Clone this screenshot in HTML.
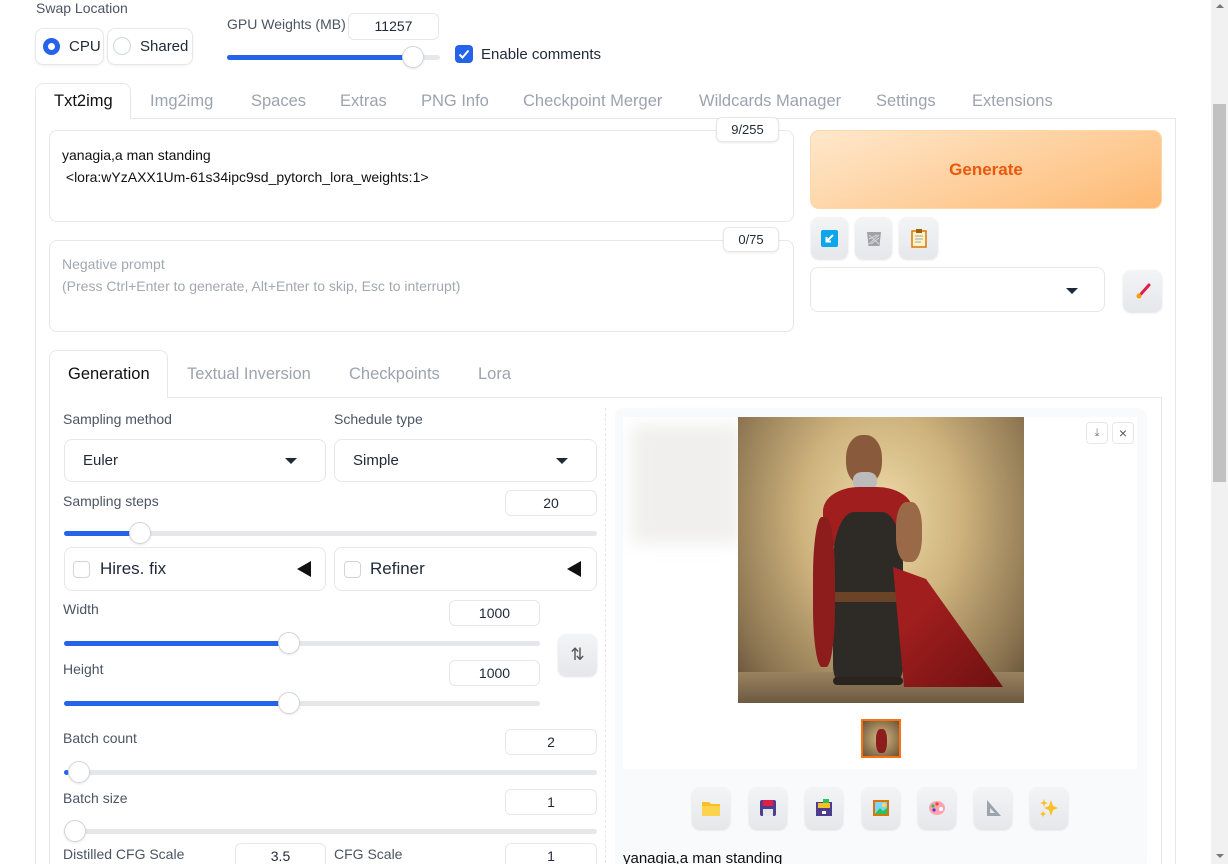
<!DOCTYPE html>
<html style="overflow:hidden;width:1228px;height:864px"><head><meta charset="utf-8"><style>
*{box-sizing:border-box;margin:0;padding:0}
body{width:1228px;height:864px;overflow:hidden;background:#fff;font-family:"Liberation Sans",sans-serif;color:#1f2937;position:relative;font-size:15px}
.a{position:absolute}
.lbl{position:absolute;color:#4b5563;font-size:14px;white-space:nowrap}
.box{position:absolute;border:1px solid #e5e7eb;border-radius:8px;background:#fff}
.inp{position:absolute;border:1px solid #e5e7eb;border-radius:6px;background:#fff;text-align:center;font-size:14px;line-height:24px;color:#1f2937}
.trk{position:absolute;height:5px;background:#e5e7eb;border-radius:3px}
.fill{position:absolute;height:5px;background:#2563eb;border-radius:3px;left:0;top:0}
.th{position:absolute;width:22px;height:22px;border-radius:50%;background:#fff;border:1px solid #d1d5db;top:-9px;box-shadow:0 1px 2px rgba(0,0,0,.1)}
.tab{position:absolute;color:#9ca3af;font-size:16.5px;white-space:nowrap}
.btn{position:absolute;background:linear-gradient(#f3f4f6,#e5e7eb);border-radius:8px;box-shadow:0 1px 2px rgba(0,0,0,.12);display:flex;align-items:center;justify-content:center}
.dd{position:absolute;border:1px solid #e5e7eb;border-radius:8px;background:#fff;font-size:15px;padding-left:18px;line-height:42px}
.car{position:absolute;right:28px;top:18px;width:0;height:0;border-left:6px solid transparent;border-right:6px solid transparent;border-top:6px solid #1f2937}
.cb{position:absolute;width:17px;height:17px;border:1px solid #d1d5db;border-radius:4px;background:#fff}
.tri{position:absolute;width:0;height:0;border-top:8px solid transparent;border-bottom:8px solid transparent;border-right:14px solid #111}
</style></head><body>

<div class="lbl" style="left:36px;top:0px">Swap Location</div>
<div class="box" style="left:35px;top:28px;width:69px;height:37px;box-shadow:0 1px 2px rgba(0,0,0,.06)"></div>
<div class="a" style="left:43px;top:38px;width:17px;height:17px;border-radius:50%;border:5px solid #2563eb;background:#fff"></div>
<div class="a" style="left:69px;top:38px;font-size:15px">CPU</div>
<div class="box" style="left:107px;top:28px;width:86px;height:37px;box-shadow:0 1px 2px rgba(0,0,0,.06)"></div>
<div class="a" style="left:113px;top:37px;width:18px;height:18px;border-radius:50%;border:1px solid #d1d5db;background:#fff"></div>
<div class="a" style="left:140px;top:38px;font-size:15px">Shared</div>

<div class="lbl" style="left:227px;top:16px">GPU Weights (MB)</div>
<div class="inp" style="left:348px;top:13px;width:91px;height:27px">11257</div>
<div class="trk" style="left:227px;top:55px;width:213px"><div class="fill" style="width:186px"></div><div class="th" style="left:175px"></div></div>
<div class="a" style="left:455px;top:45px;width:18px;height:18px;border-radius:4px;background:#2563eb"><svg width="18" height="18"><path d="M4.5 9.5l3 3 6-7" stroke="#fff" stroke-width="2" fill="none"/></svg></div>
<div class="a" style="left:481px;top:46px;font-size:15px">Enable comments</div>

<div class="a" style="left:35px;top:83px;width:96px;height:36px;border:1px solid #e5e7eb;border-bottom:none;border-radius:8px 8px 0 0;background:#fff;z-index:2"></div>
<div class="a" style="left:54px;top:92px;font-size:16.5px;color:#111;z-index:3">Txt2img</div>
<div class="tab" style="left:150px;top:92px">Img2img</div>
<div class="tab" style="left:251px;top:92px">Spaces</div>
<div class="tab" style="left:340px;top:92px">Extras</div>
<div class="tab" style="left:421px;top:92px">PNG Info</div>
<div class="tab" style="left:523px;top:92px">Checkpoint Merger</div>
<div class="tab" style="left:699px;top:92px">Wildcards Manager</div>
<div class="tab" style="left:876px;top:92px">Settings</div>
<div class="tab" style="left:972px;top:92px">Extensions</div>
<div class="a" style="left:35px;top:118px;width:1141px;height:760px;border:1px solid #e5e7eb"></div>

<div class="box" style="left:49px;top:130px;width:745px;height:92px;padding:13px 12px;font-size:14px;line-height:22px;color:#111">yanagia,a man standing<br>&nbsp;&lt;lora:wYzAXX1Um-61s34ipc9sd_pytorch_lora_weights:1&gt;</div>
<div class="inp" style="left:716px;top:117px;width:63px;height:25px;font-size:13px;box-shadow:0 1px 2px rgba(0,0,0,.08)">9/255</div>
<div class="box" style="left:49px;top:240px;width:745px;height:92px;padding:12px 12px;font-size:14px;line-height:22px;color:#a3a8b0">Negative prompt<br>(Press Ctrl+Enter to generate, Alt+Enter to skip, Esc to interrupt)</div>
<div class="inp" style="left:723px;top:227px;width:56px;height:25px;font-size:13px;box-shadow:0 1px 2px rgba(0,0,0,.08)">0/75</div>

<div class="a" style="left:810px;top:130px;width:352px;height:79px;border-radius:9px;background:linear-gradient(160deg,#ffe8cc,#fdba74);border:1px solid #fed7aa;text-align:center;line-height:77px;font-size:17px;font-weight:bold;color:#ea580c">Generate</div>
<div class="btn" style="left:811px;top:217px;width:37px;height:42px"><div style="width:17px;height:17px;background:#0ea5e9;border-radius:2px;position:relative"><svg width="17" height="17"><path d="M12 5L5.5 11.5M5.5 7v4.5H10" stroke="#fff" stroke-width="2" fill="none"/></svg></div></div>
<div class="btn" style="left:855px;top:217px;width:37px;height:42px"><svg width="18" height="18"><path d="M2 3h14l-1.5 14h-11z" fill="#a1a1aa"/><path d="M4 6l10 9M14 6l-10 9M4 10l8-4M6 15l8-6" stroke="#d4d4d8" stroke-width="1"/></svg></div>
<div class="btn" style="left:899px;top:217px;width:39px;height:42px"><svg width="16" height="20"><rect x="1" y="3" width="14" height="16" fill="#fef3c7" stroke="#d97706" stroke-width="1.5"/><rect x="5" y="1" width="6" height="4" fill="#a16207"/><path d="M4 8h8M4 11h8M4 14h6" stroke="#9ca3af"/></svg></div>
<div class="dd" style="left:810px;top:267px;width:295px;height:45px"><div class="car" style="right:26px;top:20px"></div></div>
<div class="btn" style="left:1123px;top:270px;width:39px;height:42px"><svg width="20" height="20"><path d="M16 4L8 13" stroke="#e11d48" stroke-width="3" stroke-linecap="round"/><circle cx="6" cy="15" r="2.5" fill="#f59e0b"/></svg></div>

<div class="a" style="left:49px;top:397px;width:1113px;height:480px;border:1px solid #e5e7eb"></div>
<div class="a" style="left:49px;top:350px;width:119px;height:48px;border:1px solid #e5e7eb;border-bottom:none;border-radius:8px 8px 0 0;background:#fff"></div>
<div class="a" style="left:68px;top:365px;font-size:16.5px;color:#111">Generation</div>
<div class="tab" style="left:187px;top:365px">Textual Inversion</div>
<div class="tab" style="left:349px;top:365px">Checkpoints</div>
<div class="tab" style="left:478px;top:365px">Lora</div>
<div class="a" style="left:605px;top:408px;height:460px;border-left:1px dashed #e5e7eb"></div>

<div class="lbl" style="left:63px;top:411px">Sampling method</div>
<div class="lbl" style="left:334px;top:411px">Schedule type</div>
<div class="dd" style="left:64px;top:439px;width:262px;height:43px">Euler<div class="car"></div></div>
<div class="dd" style="left:334px;top:439px;width:263px;height:43px">Simple<div class="car"></div></div>
<div class="lbl" style="left:63px;top:493px">Sampling steps</div>
<div class="inp" style="left:505px;top:490px;width:92px;height:26px">20</div>
<div class="trk" style="left:64px;top:531px;width:533px"><div class="fill" style="width:70px"></div><div class="th" style="left:65px"></div></div>
<div class="box" style="left:64px;top:547px;width:262px;height:44px"></div>
<div class="cb" style="left:73px;top:561px"></div>
<div class="a" style="left:100px;top:559px;font-size:17px">Hires. fix</div>
<div class="tri" style="left:297px;top:561px"></div>
<div class="box" style="left:334px;top:547px;width:263px;height:44px"></div>
<div class="cb" style="left:344px;top:561px"></div>
<div class="a" style="left:370px;top:559px;font-size:17px">Refiner</div>
<div class="tri" style="left:567px;top:561px"></div>

<div class="lbl" style="left:63px;top:601px">Width</div>
<div class="inp" style="left:449px;top:600px;width:91px;height:26px">1000</div>
<div class="trk" style="left:64px;top:641px;width:476px"><div class="fill" style="width:220px"></div><div class="th" style="left:214px"></div></div>
<div class="btn" style="left:558px;top:634px;width:39px;height:42px;color:#555;font-size:17px">⇅</div>
<div class="lbl" style="left:63px;top:661px">Height</div>
<div class="inp" style="left:449px;top:660px;width:91px;height:26px">1000</div>
<div class="trk" style="left:64px;top:701px;width:476px"><div class="fill" style="width:220px"></div><div class="th" style="left:214px"></div></div>

<div class="lbl" style="left:63px;top:730px">Batch count</div>
<div class="inp" style="left:505px;top:729px;width:92px;height:26px">2</div>
<div class="trk" style="left:64px;top:770px;width:533px"><div class="fill" style="width:5px"></div><div class="th" style="left:4px"></div></div>
<div class="lbl" style="left:63px;top:790px">Batch size</div>
<div class="inp" style="left:505px;top:789px;width:92px;height:26px">1</div>
<div class="trk" style="left:64px;top:829px;width:533px"><div class="th" style="left:0px"></div></div>
<div class="lbl" style="left:63px;top:846px">Distilled CFG Scale</div>
<div class="inp" style="left:235px;top:843px;width:91px;height:26px">3.5</div>
<div class="lbl" style="left:334px;top:846px">CFG Scale</div>
<div class="inp" style="left:505px;top:843px;width:92px;height:26px">1</div>

<div class="a" style="left:615px;top:408px;width:532px;height:460px;background:#f9fafb;border-radius:8px"></div>
<div class="a" style="left:623px;top:417px;width:514px;height:352px;background:#fff"></div>
<div class="a" style="left:632px;top:425px;width:108px;height:118px;background:#f0efee;filter:blur(8px)"></div>
<div class="a" style="left:738px;top:417px;width:286px;height:286px;overflow:hidden;background:radial-gradient(ellipse at 50% 35%,#f0dcaa 0%,#cdb27c 40%,#8a7350 80%,#5a4a33 100%)">
 <div class="a" style="left:0;top:255px;width:286px;height:31px;background:linear-gradient(#9a8260,#6d5a40)"></div>
 <div class="a" style="left:108px;top:18px;width:36px;height:50px;border-radius:45%;background:#8a5a3c"></div>
 <div class="a" style="left:115px;top:55px;width:24px;height:18px;border-radius:40%;background:#bbb"></div>
 <div class="a" style="left:85px;top:70px;width:90px;height:60px;border-radius:40% 40% 20% 20%;background:#a11e1e"></div>
 <div class="a" style="left:95px;top:95px;width:70px;height:170px;border-radius:30% 30% 10% 10%;background:#2e2a26"></div>
 <div class="a" style="left:158px;top:85px;width:26px;height:60px;border-radius:40%;background:#9a6a48"></div>
 <div class="a" style="left:95px;top:175px;width:70px;height:10px;background:#6b4428"></div>
 <div class="a" style="left:155px;top:150px;width:110px;height:120px;background:linear-gradient(135deg,#a11e1e 30%,#6e1111);clip-path:polygon(0 0,30% 10%,100% 100%,10% 100%)"></div>
 <div class="a" style="left:75px;top:100px;width:22px;height:150px;background:#8d1c1c;border-radius:40%"></div>
 <div class="a" style="left:95px;top:260px;width:70px;height:8px;background:#2a241e;border-radius:4px"></div>
</div>
<div class="a" style="left:861px;top:719px;width:40px;height:39px;border:2px solid #f97316;background:radial-gradient(#d8bd85,#6a5236)"><div class="a" style="left:13px;top:8px;width:11px;height:24px;background:#8d1c1c;border-radius:40%"></div></div>
<div class="a" style="left:1086px;top:422px;width:22px;height:22px;border:1px solid #e5e7eb;border-radius:4px;background:#fff;text-align:center;font-size:11px;line-height:20px;color:#777">⤓</div>
<div class="a" style="left:1112px;top:422px;width:22px;height:22px;border:1px solid #e5e7eb;border-radius:4px;background:#fff;text-align:center;font-size:14px;line-height:20px;color:#555">×</div>

<div class="btn" style="left:692px;top:787px;width:38px;height:42px"><svg width="20" height="18"><path d="M1 3h7l2 2h9v12H1z" fill="#fbbf24"/><path d="M1 7h18v10H1z" fill="#fcd34d"/></svg></div>
<div class="btn" style="left:749px;top:787px;width:38px;height:42px"><svg width="18" height="18"><rect x="1" y="1" width="16" height="16" rx="2" fill="#4c3d8f"/><rect x="4" y="1" width="10" height="6" fill="#e11d48"/><rect x="4" y="10" width="10" height="7" fill="#e5e7eb"/></svg></div>
<div class="btn" style="left:805px;top:787px;width:38px;height:42px"><svg width="18" height="18"><rect x="1" y="3" width="16" height="14" fill="#4c3d8f"/><rect x="3" y="4" width="12" height="5" fill="#fbbf24"/><rect x="7" y="12" width="4" height="3" fill="#fff"/><rect x="8" y="0" width="6" height="4" fill="#22c55e"/></svg></div>
<div class="btn" style="left:862px;top:787px;width:38px;height:42px"><svg width="18" height="18"><rect x="1" y="1" width="16" height="16" fill="#d97706"/><rect x="3" y="3" width="12" height="12" fill="#7dd3fc"/><path d="M3 15l5-6 3 3 4-3v6z" fill="#22c55e"/><circle cx="12" cy="6" r="2" fill="#fde047"/></svg></div>
<div class="btn" style="left:918px;top:787px;width:38px;height:42px"><svg width="18" height="18"><ellipse cx="9" cy="9" rx="8" ry="7" fill="#fda4af"/><circle cx="5" cy="7" r="1.6" fill="#22c55e"/><circle cx="9" cy="5" r="1.6" fill="#ef4444"/><circle cx="6" cy="11" r="1.6" fill="#6d28d9"/><circle cx="13" cy="10" r="2" fill="#fff"/></svg></div>
<div class="btn" style="left:974px;top:787px;width:38px;height:42px"><svg width="18" height="18"><path d="M3 1v16h14z" fill="#9ca3af"/><path d="M6 9v5h5z" fill="#e5e7eb"/></svg></div>
<div class="btn" style="left:1030px;top:787px;width:38px;height:42px"><svg width="20" height="20"><path d="M12 2l2 6 5 2-5 2-2 6-2-6-5-2 5-2z" fill="#fbbf24"/><path d="M5 1l1 3 3 1-3 1-1 3-1-3-3-1 3-1z" fill="#fbbf24"/><path d="M4 13l1 2 2 1-2 1-1 2-1-2-2-1 2-1z" fill="#fbbf24"/></svg></div>
<div class="a" style="left:623px;top:850px;font-size:15px;color:#111">yanagia,a man standing</div>

<div class="a" style="left:1211px;top:0;width:17px;height:864px;background:#f1f1f1"></div>
<div class="a" style="left:1213px;top:104px;width:13px;height:378px;background:#c1c1c1"></div>
<div class="a" style="left:1216px;top:4px;width:0;height:0;border-left:4px solid transparent;border-right:4px solid transparent;border-bottom:4px solid #777"></div>
<div class="a" style="left:1216px;top:854px;width:0;height:0;border-left:4px solid transparent;border-right:4px solid transparent;border-top:4px solid #777"></div>
</body></html>
